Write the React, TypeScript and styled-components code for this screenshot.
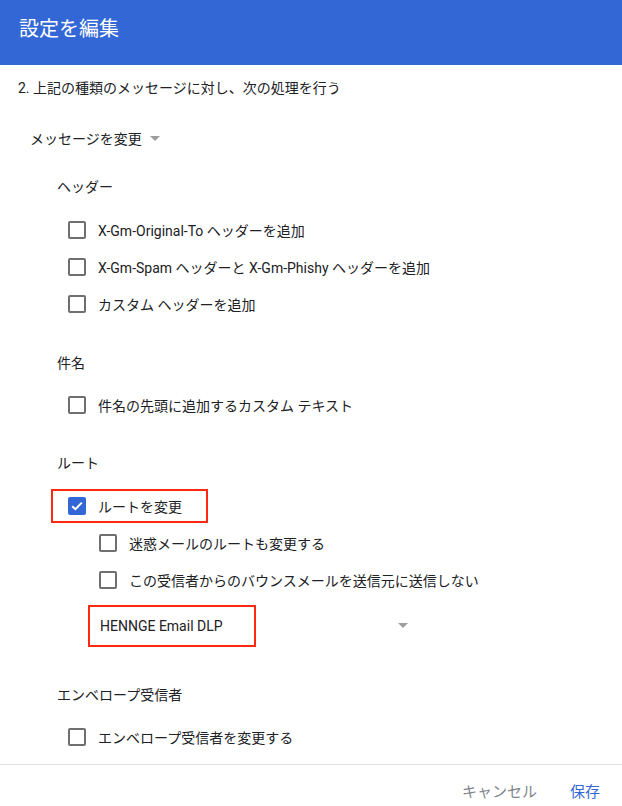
import React from "react";
import styled, { createGlobalStyle } from "styled-components";

const Global = createGlobalStyle`
  html, body { margin: 0; padding: 0; background: #fff; overflow: hidden; }
  body { font-family: Roboto, "Noto Sans CJK JP", "Noto Sans", sans-serif; color: #202124; }
`;

const Dialog = styled.div`
  width: 622px;
  height: 806px;
  display: flex;
  flex-direction: column;
  background: #fff;
  overflow: hidden;
`;

const Header = styled.header`
  height: 65px;
  flex: none;
  background: #3367d6;
  color: #fff;
  font-size: 20px;
  line-height: 24px;
  padding: 17px 0 0 19px;
  box-sizing: border-box;
`;

const Body = styled.div`
  flex: none;
  padding: 13px 0 0 18px;
  display: flex;
  flex-direction: column;
`;

const Desc = styled.div`
  font-size: 14px;
  line-height: 20px;
`;

const ActionSelect = styled.div`
  margin: 31px 0 0 12px;
  font-size: 14px;
  line-height: 20px;
  display: flex;
  align-items: center;
  gap: 8px;
`;

const Caret = styled.span`
  width: 0;
  height: 0;
  border-left: 5px solid transparent;
  border-right: 5px solid transparent;
  border-top: 5px solid #9e9e9e;
  margin-top: -2px;
`;

const Section = styled.section<{ $gap: number }>`
  margin: ${(p) => p.$gap}px 0 0 39px;
  display: flex;
  flex-direction: column;
`;

const Heading = styled.div<{ $space?: number }>`
  font-size: 14px;
  line-height: 20px;
  margin-bottom: ${(p) => p.$space ?? 14}px;
`;

const Rows = styled.div<{ $indent?: number }>`
  display: flex;
  flex-direction: column;
  padding-left: ${(p) => p.$indent ?? 11}px;
`;

const Row = styled.label<{ $highlight?: boolean }>`
  display: flex;
  align-items: center;
  gap: 12px;
  height: 37px;
  font-size: 14px;
  box-sizing: border-box;
  ${(p) =>
    p.$highlight &&
    `
    width: fit-content;
    height: 34px;
    margin: 2px 0 1px -17px;
    padding: 0 24px 0 15px;
    border: 2px solid #ff2a0e;
  `}
`;

const Box = styled.span<{ $checked?: boolean }>`
  width: 18px;
  height: 18px;
  box-sizing: border-box;
  border-radius: 2px;
  border: 2px solid ${(p) => (p.$checked ? "#3367d6" : "#6f6f6f")};
  background: ${(p) => (p.$checked ? "#3367d6" : "#fff")};
  display: flex;
  align-items: center;
  justify-content: center;
  flex: none;
`;

const SelectRow = styled.div`
  margin: 7px 0 0 31px;
  width: 320px;
  display: flex;
  align-items: center;
  justify-content: space-between;
`;

const SelectValue = styled.div`
  width: 168px;
  height: 42px;
  box-sizing: border-box;
  border: 2px solid #ff2a0e;
  padding-left: 10px;
  display: flex;
  align-items: center;
  font-size: 14px;
  color: #202124;
`;

const Divider = styled.hr`
  flex: none;
  border: none;
  border-top: 1px solid #e0e0e0;
  margin: 9px 0 0;
  width: 100%;
`;

const Footer = styled.footer`
  flex: none;
  display: flex;
  justify-content: flex-end;
  align-items: center;
  gap: 33px;
  height: 50px;
  padding-right: 22px;
`;

const TextButton = styled.button<{ $primary?: boolean }>`
  border: none;
  background: none;
  padding: 0;
  font-family: inherit;
  font-size: 15px;
  color: ${(p) => (p.$primary ? "#3367d6" : "#80868b")};
  cursor: pointer;
`;

const Check: React.FC<{ checked?: boolean; highlight?: boolean; label: string }> = ({
  checked,
  highlight,
  label,
}) => (
  <Row $highlight={highlight}>
    <Box $checked={checked}>
      {checked && (
        <svg width="12" height="10" viewBox="0 0 12 10">
          <path d="M1.2 5.2 L4.4 8.2 L10.8 1.6" stroke="#fff" strokeWidth="2" fill="none" />
        </svg>
      )}
    </Box>
    <span>{label}</span>
  </Row>
);

export default function App() {
  return (
    <>
      <Global />
      <Dialog>
        <Header>設定を編集</Header>
        <Body>
          <Desc>2. 上記の種類のメッセージに対し、次の処理を行う</Desc>
          <ActionSelect>
            メッセージを変更
            <Caret />
          </ActionSelect>

          <Section $gap={28}>
            <Heading>ヘッダー</Heading>
            <Rows>
              <Check label="X-Gm-Original-To ヘッダーを追加" />
              <Check label="X-Gm-Spam ヘッダーと X-Gm-Phishy ヘッダーを追加" />
              <Check label="カスタム ヘッダーを追加" />
            </Rows>
          </Section>

          <Section $gap={31}>
            <Heading $space={13}>件名</Heading>
            <Rows>
              <Check label="件名の先頭に追加するカスタム テキスト" />
            </Rows>
          </Section>

          <Section $gap={30}>
            <Heading>ルート</Heading>
            <Rows>
              <Check checked highlight label="ルートを変更" />
              <Rows $indent={31}>
                <Check label="迷惑メールのルートも変更する" />
                <Check label="この受信者からのバウンスメールを送信元に送信しない" />
              </Rows>
            </Rows>
            <SelectRow>
              <SelectValue>HENNGE Email DLP</SelectValue>
              <Caret />
            </SelectRow>
          </Section>

          <Section $gap={38}>
            <Heading $space={13}>エンベロープ受信者</Heading>
            <Rows>
              <Check label="エンベロープ受信者を変更する" />
            </Rows>
          </Section>
        </Body>
        <Divider />
        <Footer>
          <TextButton>キャンセル</TextButton>
          <TextButton $primary>保存</TextButton>
        </Footer>
      </Dialog>
    </>
  );
}
